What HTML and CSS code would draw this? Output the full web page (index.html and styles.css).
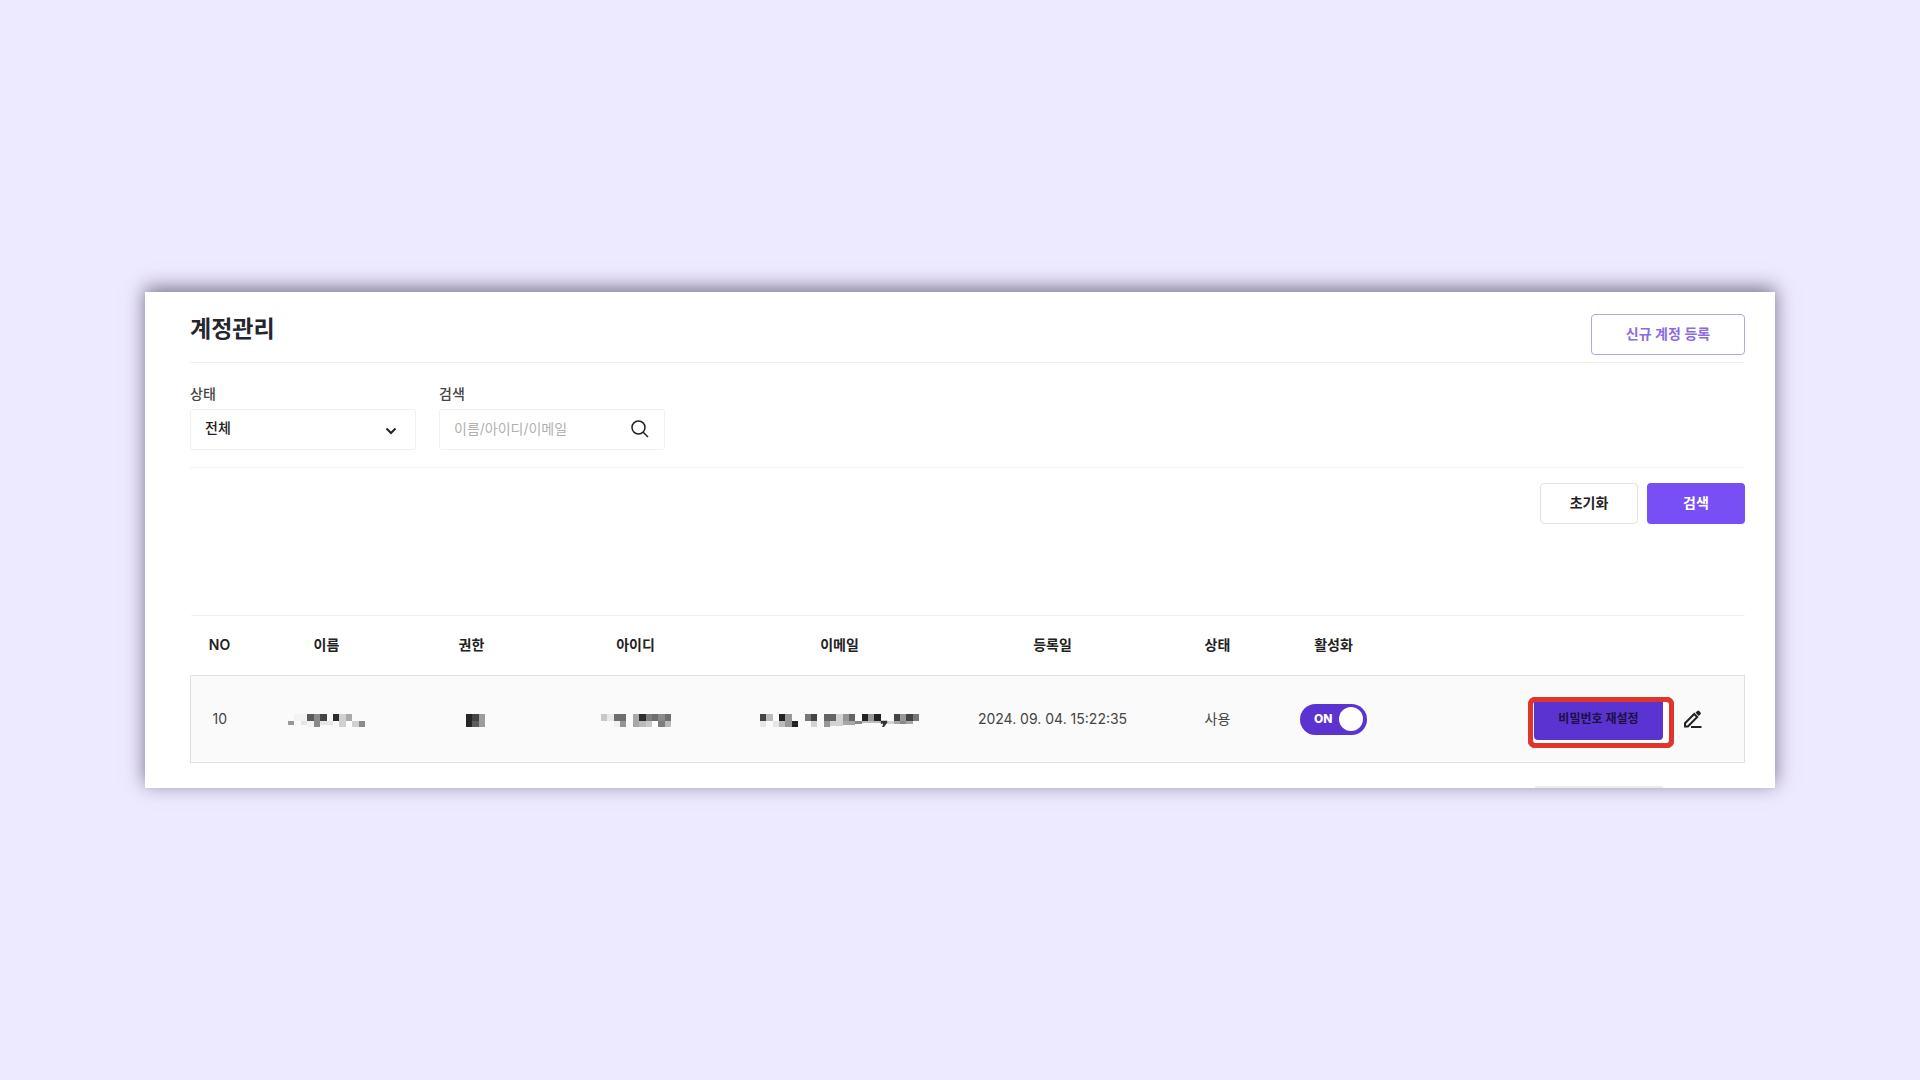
FILE: index.html
```html
<!DOCTYPE html>
<html lang="ko">
<head>
<meta charset="utf-8">
<meta name="viewport" content="width=device-width, initial-scale=1">
<title>계정관리</title>
<link rel="stylesheet" href="styles.css">
</head>
<body>
<main class="panel">
  <header class="panel-head">
    <h1 class="title">계정관리</h1>
    <button type="button" class="btn btn-outline">신규 계정 등록</button>
  </header>

  <form class="filters">
    <div class="fields">
      <div class="field">
        <label class="field-label" for="status">상태</label>
        <div class="control">
          <select id="status" class="input"><option>전체</option></select>
          <svg class="icon chevron" viewBox="0 0 12 8" aria-hidden="true"><path d="M1.5 1.5 6 6l4.500-4.500"/></svg>
        </div>
      </div>
      <div class="field">
        <label class="field-label" for="keyword">검색</label>
        <div class="control">
          <input id="keyword" class="input" type="text" placeholder="이름/아이디/이메일">
          <svg class="icon magnifier" viewBox="0 0 18 18" aria-hidden="true"><circle cx="7.500" cy="7.500" r="6.500"/><path d="m12.200 12.200 4.800 4.800"/></svg>
        </div>
      </div>
    </div>
    <div class="actions">
      <button type="reset" class="btn btn-plain">초기화</button>
      <button type="button" class="btn btn-primary">검색</button>
    </div>
  </form>

  <table class="accounts">
    <colgroup>
      <col class="col-no"><col class="col-name"><col class="col-role"><col class="col-id"><col class="col-email"><col class="col-date"><col class="col-status"><col class="col-active"><col>
    </colgroup>
    <thead>
      <tr>
        <th>NO</th><th>이름</th><th>권한</th><th>아이디</th><th>이메일</th><th>등록일</th><th>상태</th><th>활성화</th><th></th>
      </tr>
    </thead>
    <tbody>
      <tr>
        <td>10</td>
        <td>
          <svg class="mask mask-name" viewBox="0 0 12 2" preserveAspectRatio="none" shape-rendering="crispEdges" aria-hidden="true">
            <path fill="#f3f3f3" d="M1 0h2v1h-2zM3 1h1v1h-1z"/><path fill="#999" d="M0 1h1v.7h-1z"/><path fill="#e6e6e6" d="M2 1h1v.7h-1zM5 1h2v.7h-2z"/>
            <path fill="#5a5a5a" d="M3 0h1v1h-1z"/><path fill="#8a8a8a" d="M4 0h1v2h-1zM11 1h1v1h-1z"/><path fill="#444" d="M5 0h1v1h-1z"/><path fill="#2c2c2c" d="M7 0h1v1h-1z"/>
            <path fill="#d0d0d0" d="M8 0h1v2h-1zM10 1h1v1h-1z"/><path fill="#aaa" d="M9 0h1v1h-1z"/><path fill="#fff" d="M9 1h1v1h-1z"/>
          </svg>
        </td>
        <td class="role">
          <svg class="mask mask-role" viewBox="0 0 3 2" preserveAspectRatio="none" shape-rendering="crispEdges" aria-hidden="true">
            <path fill="#262626" d="M0 0h1v2h-1z"/><path fill="#444" d="M1 0h1v1h-1z"/><path fill="#5c5c5c" d="M1 1h1v1h-1z"/><path fill="#9c9c9c" d="M2 0h1v2h-1z"/>
          </svg>
        </td>
        <td>
          <svg class="mask mask-id" viewBox="0 0 11 2" preserveAspectRatio="none" shape-rendering="crispEdges" aria-hidden="true">
            <path fill="#c8c8c8" d="M0 0h1v1h-1zM7 1h1v1h-1z"/><path fill="#e8e8e8" d="M1 0h1v1h-1z"/><path fill="#6e6e6e" d="M2 0h2v1h-2zM8 0h1v1h-1zM10 0h1v1h-1z"/><path fill="#f0f0f0" d="M2 1h1v1h-1z"/><path fill="#949494" d="M3 1h1v1h-1z"/>
            <path fill="#a8a8a8" d="M5 0h1v2h-1z"/><path fill="#2e2e2e" d="M6 0h1v1h-1z"/><path fill="#bababa" d="M6 1h1v1h-1zM10 1h1v1h-1z"/><path fill="#7e7e7e" d="M7 0h1v1h-1zM9 1h1v1h-1z"/><path fill="#8a8a8a" d="M9 0h1v1h-1z"/><path fill="#fff" d="M8 1h1v1h-1z"/>
          </svg>
        </td>
        <td>
          <svg class="mask mask-email" viewBox="0 0 25 2" preserveAspectRatio="none" shape-rendering="crispEdges" aria-hidden="true">
            <path fill="#444" d="M0 0h1v1h-1zM8 0h1v1h-1zM21 0h1v1h-1zM23 0h1v1h-1z"/><path fill="#e6e6e6" d="M0 1h1v1h-1zM2 1h1v1h-1z"/><path fill="#bbb" d="M1 0h1v1h-1zM3 1h1v1h-1zM16 1h3v.4h-3z"/>
            <path fill="#222" d="M3 0h1v1h-1zM5 1h1v1h-1zM16 0h1v1h-1zM18 0h1v1h-1z"/><path fill="#979797" d="M4 0h1v2h-1zM10 1h1v1h-1zM13 0h1v1h-1zM17 0h1v1h-1zM22 0h1v1h-1z"/><path fill="#777" d="M7 0h1v1h-1zM24 0h1v1h-1z"/>
            <path fill="#d2d2d2" d="M8 1h1v1h-1zM11 1h1v.8h-1zM12 0h1v1.800h-1zM20 1h1v.5h-1z"/><path fill="#646464" d="M10 0h2v1h-2zM14 0h1v1h-1z"/><path fill="#a6a6a6" d="M13 1h2v.7h-2zM21 1h1v.5h-1zM23 1h1v.5h-1z"/><path fill="#888" d="M15 1h1v.6h-1zM22 1h1v.5h-1z"/>
            <path fill="#333" shape-rendering="auto" d="M19 1.050h1v.3l-.5.650h-.3l.2-.5h-.4z"/>
          </svg>
        </td>
        <td>2024. 09. 04. 15:22:35</td>
        <td>사용</td>
        <td>
          <label class="switch"><input class="switch-input" type="checkbox" checked aria-label="활성화"><span class="switch-text">ON</span><span class="switch-knob"></span></label>
        </td>
        <td>
          <div class="row-tools">
            <span class="highlight"><button type="button" class="btn btn-reset">비밀번호 재설정</button></span>
            <button type="button" class="edit" aria-label="수정">
              <svg class="icon pencil" viewBox="0 0 20 20" aria-hidden="true"><path d="M2 17.500v-3.300L11.200 5l3 3-9.300 9.500z"/><path d="M8 18h10.500"/><path class="solid" d="m12.500 3.700 1.700-1.700q1-1 2 0l1.200 1.200q1 1 0 2l-1.700 1.700z"/></svg>
            </button>
          </div>
        </td>
      </tr>
    </tbody>
  </table>
  <div class="next-row"></div>
</main>
</body>
</html>
```
FILE: styles.css
```css
*, *::before, *::after {
  box-sizing: border-box;
}

body {
  display: flex;
  align-items: center;
  min-height: 100vh;
  margin: 0;
  padding: 24px 145px;
  background: #ede9fe;
  color: #222;
  font-family: Inter, "Noto Sans CJK KR", sans-serif;
  font-size: 14px;
  line-height: 20px;
}

button, input, select {
  font: inherit;
  color: inherit;
}

.panel {
  flex: 1;
  min-width: 0;
  padding: 0 30px 0 45px;
  background: #fff;
  box-shadow: 0 -4px 18px rgba(40, 32, 64, 0.6);
}

.panel-head {
  display: flex;
  justify-content: space-between;
  align-items: flex-start;
  height: 71px;
  padding-top: 22px;
  border-bottom: 1px solid #f0f0f0;
}

.title {
  margin: 0;
  color: #25252d;
  font-size: 23px;
  line-height: 30px;
  font-weight: 700;
}

.btn {
  height: 41px;
  padding: 0 0 1px;
  border: 1px solid transparent;
  border-radius: 4px;
  font-weight: 600;
}

.btn-outline {
  width: 154px;
  border-color: #b5a5e6;
  background: #fff;
  color: #8c6bdf;
}

.btn-plain {
  width: 98px;
  border-color: #e2e2e2;
  background: #fff;
}

.btn-primary {
  width: 98px;
  background: #784ef5;
  color: #fff;
}

.fields {
  display: flex;
  gap: 23px;
  padding: 21px 0 17px;
  border-bottom: 1px solid #f3f3f3;
}

.field {
  width: 226px;
}

.field-label {
  display: block;
  margin-bottom: 5px;
  color: #444;
  font-weight: 500;
}

.control {
  position: relative;
}

.input {
  display: block;
  width: 100%;
  height: 41px;
  padding: 0 14px 3px;
  border: 1px solid #f0f0f0;
  border-radius: 3px;
  background: #fff;
  appearance: none;
}

select.input {
  font-weight: 500;
}

.input::placeholder {
  color: #b0b0b0;
  opacity: 1;
}

.icon {
  display: block;
  fill: none;
  stroke: #222;
  stroke-width: 2;
}

.chevron {
  position: absolute;
  top: 18px;
  right: 19px;
  width: 12px;
  height: 8px;
}

.magnifier {
  position: absolute;
  top: 11px;
  right: 16px;
  width: 18px;
  height: 18px;
  stroke-width: 1.5;
}

.actions {
  display: flex;
  justify-content: flex-end;
  gap: 9px;
  padding: 15px 0 91px;
}

.accounts {
  width: 100%;
  border-collapse: collapse;
  table-layout: fixed;
  text-align: center;
}

.col-no { width: 58px; }
.col-name { width: 156px; }
.col-role { width: 134px; }
.col-id { width: 194px; }
.col-email { width: 214px; }
.col-date { width: 212px; }
.col-status { width: 118px; }
.col-active { width: 114px; }

.accounts th {
  height: 60px;
  padding: 0 0 1px;
  border-top: 1px solid #f0f0f0;
  font-weight: 600;
}

.accounts td {
  height: 87px;
  padding: 0;
  background: #fafafa;
  color: #444;
}

.accounts tbody tr {
  border: 1px solid #e0e0e0;
}

.accounts .role {
  padding-left: 8px;
}

.mask {
  display: block;
  height: 13px;
  margin: 3px auto 0;
}

.mask-name { width: 77px; }
.mask-role { width: 19px; }
.mask-id { width: 70px; }
.mask-email { width: 159px; }

.switch {
  position: relative;
  display: flex;
  align-items: center;
  justify-content: space-between;
  width: 67px;
  height: 31px;
  margin: 0 auto;
  padding: 0 4px 0 14px;
  border-radius: 16px;
  background: #5b33d0;
}

.switch-input {
  position: absolute;
  inset: 0;
  width: 100%;
  height: 100%;
  margin: 0;
  opacity: 0;
}

.switch-text {
  color: #fff;
  font-size: 12px;
  font-weight: 800;
}

.switch-knob {
  width: 24px;
  height: 24px;
  border-radius: 50%;
  background: #fff;
}

.row-tools {
  display: flex;
  justify-content: flex-end;
  align-items: center;
  gap: 20px;
  padding-right: 41px;
}

.highlight {
  position: relative;
  isolation: isolate;
}

/* red frame around the reset button */
.highlight::before,
.highlight::after {
  content: "";
  position: absolute;
  inset: -2px -11px -8px -6px;
  border: 5px solid #e0352b;
  border-radius: 7px;
  pointer-events: none;
}

.highlight::before {
  z-index: -1;
  background: #fff;
}

.btn-reset {
  display: block;
  width: 129px;
  background: #5b33d0;
  color: #1c1040;
  font-size: 12px;
}

.edit {
  padding: 0;
  border: 0;
  background: none;
}

.pencil {
  width: 20px;
  height: 20px;
}

.solid {
  fill: #222;
  stroke: none;
}

/* top edge of the following row's button */
.next-row {
  width: 128px;
  height: 25px;
  margin: 0 82px 0 auto;
  border-bottom: 2px solid #ececec;
}
```
